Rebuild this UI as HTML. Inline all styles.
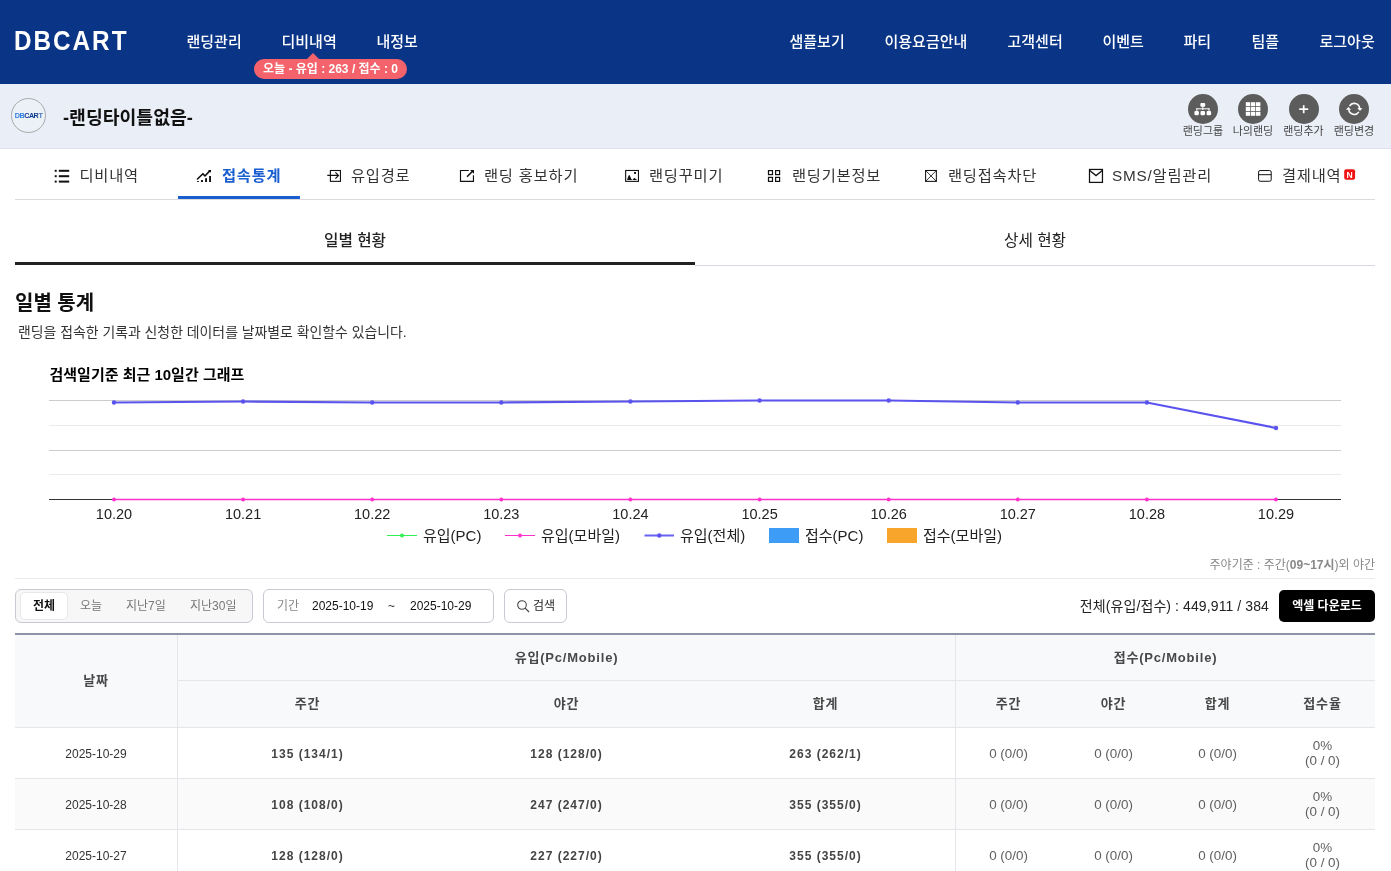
<!DOCTYPE html>
<html lang="ko">
<head>
<meta charset="utf-8">
<title>DBCART</title>
<style>
*{box-sizing:border-box;margin:0;padding:0}
html,body{width:1391px;height:871px;overflow:hidden;background:#fff}
body{will-change:transform;font-family:"Liberation Sans","Noto Sans CJK KR",sans-serif;color:#222;position:relative}
.abs{position:absolute}
/* header */
#hd{position:absolute;left:0;top:0;width:1391px;height:84px;background:#0a3586}
#logo{position:absolute;left:14px;top:22.5px;font-size:27px;line-height:36px;font-weight:700;color:#fff;letter-spacing:2.2px;transform:scaleX(.9);transform-origin:0 0;font-family:"Liberation Sans","Noto Sans CJK KR",sans-serif}
.nav{position:absolute;top:31px;margin-left:-.5px;font-size:15px;line-height:22px;color:#fff;white-space:nowrap;font-weight:500}
#badge{position:absolute;left:254px;top:59px;width:153px;height:20px;border-radius:10px;background:#f4636c;color:#fff;font-size:12px;line-height:21px;font-weight:700;text-align:center;white-space:nowrap}
#badge:before{content:"";position:absolute;left:53px;top:-6px;border-left:6.5px solid transparent;border-right:6.5px solid transparent;border-bottom:6px solid #f4636c}
/* sub header */
#sh{position:absolute;left:0;top:84px;width:1391px;height:65px;background:#eaeef6;border-bottom:1px solid #dde2ec}
#clogo{position:absolute;left:11px;top:14px;width:35px;height:35px;border-radius:50%;background:#ecf0f7;border:1px solid #a9a9a9;text-align:center;font-size:7.2px;line-height:34px;font-weight:700;color:#0c3a8c;letter-spacing:-.45px;white-space:nowrap}
#ttl{position:absolute;left:63px;top:19.5px;font-size:18.3px;line-height:28px;font-weight:700;color:#111;white-space:nowrap}
.ic{position:absolute;top:10px;width:30px;height:30px;border-radius:50%;background:#5c5c5c}
.ic svg{position:absolute;left:0;top:0}
.il{position:absolute;top:40px;width:60px;text-align:center;font-size:11px;line-height:14px;color:#444;white-space:nowrap}
/* tabs */
#tabs{position:absolute;left:15px;top:149px;width:1360px;height:51px;border-bottom:1px solid #dcdcdc}
.tab{position:absolute;top:14.5px;font-size:15.3px;letter-spacing:.8px;line-height:24px;color:#333;white-space:nowrap}
.tab.on{color:#1a5fd0;font-weight:700}
.ti{position:absolute;top:19px}
#tabul{position:absolute;left:163px;top:47px;width:122px;height:3px;background:#1a5fd0}
/* subtabs */
.st{position:absolute;top:229px;width:680px;text-align:center;font-size:15.7px;line-height:24px;color:#222;font-weight:500}

.ft{position:absolute;top:597px;font-size:12px;line-height:18px;color:#777;white-space:nowrap}
#tb{position:absolute;left:15px;top:633px;width:1360px;height:238px}
.th{position:absolute;text-align:center;font-size:13px;line-height:18px;font-weight:700;color:#484848;letter-spacing:.8px;white-space:nowrap;margin-top:2px}
.td{position:absolute;text-align:center;font-size:12px;line-height:18px;color:#333;white-space:nowrap}
.td.b{font-weight:700;letter-spacing:1px;color:#444;margin-top:.5px}
.td.dt{margin-top:.8px}
.td.g{font-size:13.4px;color:#606060;margin-top:.7px}
</style>
</head>
<body>
<div id="hd">
  <div id="logo">DBCART</div>
  <div class="nav" style="left:187px">랜딩관리</div>
  <div class="nav" style="left:282px">디비내역</div>
  <div class="nav" style="left:377px">내정보</div>
  <div class="nav" style="left:790px">샘플보기</div>
  <div class="nav" style="left:885px">이용요금안내</div>
  <div class="nav" style="left:1008px">고객센터</div>
  <div class="nav" style="left:1103px">이벤트</div>
  <div class="nav" style="left:1184px">파티</div>
  <div class="nav" style="left:1252px">팀플</div>
  <div class="nav" style="left:1320px">로그아웃</div>
  <div id="badge">오늘 - 유입 : 263 / 접수 : 0</div>
</div>
<div id="sh">
  <div id="clogo"><span style="color:#2f7de0">DB</span>CAR<span style="color:#4a78c0">T</span></div>
  <div id="ttl">-랜딩타이틀없음-</div>
  <div class="ic" style="left:1188px"><svg width="30" height="30" viewBox="0 0 30 30"><g fill="#fff"><rect x="12.4" y="8.9" width="4.8" height="3.8" rx="1"/><rect x="14.3" y="12" width="1" height="4"/><rect x="8.3" y="14.3" width="13.2" height="1"/><rect x="8.3" y="14.3" width="1" height="3"/><rect x="20.5" y="14.3" width="1" height="3"/><rect x="6.4" y="16.9" width="4.5" height="4.4" rx="1.2"/><rect x="12.5" y="16.9" width="4.5" height="4.4" rx="1.2"/><rect x="18.6" y="16.9" width="4.5" height="4.4" rx="1.2"/></g></svg></div><div class="il" style="left:1173px">랜딩그룹</div>
  <div class="ic" style="left:1238px"><svg width="30" height="30" viewBox="0 0 30 30"><g fill="#fff"><rect x="7.8" y="8.2" width="4.4" height="4"/><rect x="12.9" y="8.2" width="4.4" height="4"/><rect x="18" y="8.2" width="4.4" height="4"/><rect x="7.8" y="13" width="4.4" height="4"/><rect x="12.9" y="13" width="4.4" height="4"/><rect x="18" y="13" width="4.4" height="4"/><rect x="7.8" y="17.8" width="4.4" height="4"/><rect x="12.9" y="17.8" width="4.4" height="4"/><rect x="18" y="17.8" width="4.4" height="4"/></g></svg></div><div class="il" style="left:1223px">나의랜딩</div>
  <div class="ic" style="left:1289px"><svg width="30" height="30" viewBox="0 0 30 30"><g fill="#fff"><rect x="10.2" y="14.3" width="9" height="1.7"/><rect x="13.85" y="11.2" width="1.7" height="8"/></g></svg></div><div class="il" style="left:1273.5px">랜딩추가</div>
  <div class="ic" style="left:1339px"><svg width="30" height="30" viewBox="0 0 30 30"><g fill="none" stroke="#fff" stroke-width="1.5"><path d="M10.58 12.01 A5.45 5.45 0 0 1 20.65 14.4"/><path d="M19.82 17.79 A5.45 5.45 0 0 1 9.75 15.4"/></g><g fill="#fff"><path d="M6.9 15.85 L12.05 15.85 L9.4 13 Z"/><path d="M18.3 14.1 L23.4 14.1 L21 17.05 Z"/></g></svg></div><div class="il" style="left:1324px">랜딩변경</div>
</div>
<div id="tabs">
  <div class="tab" style="left:64.5px">디비내역</div>
  <div class="tab on" style="left:207px">접속통계</div>
  <div class="tab" style="left:336px">유입경로</div>
  <div class="tab" style="left:469px">랜딩 홍보하기</div>
  <div class="tab" style="left:634px">랜딩꾸미기</div>
  <div class="tab" style="left:777px">랜딩기본정보</div>
  <div class="tab" style="left:933px">랜딩접속차단</div>
  <div class="tab" style="left:1097px">SMS/알림관리</div>
  <div class="tab" style="left:1267px">결제내역</div>
  <svg class="abs" style="left:39px;top:20px" width="16" height="14" viewBox="0 0 16 14"><g fill="#111"><rect x=".7" y=".8" width="2" height="2"/><rect x="4.8" y=".8" width="10.4" height="2"/><rect x=".7" y="6.2" width="2" height="2"/><rect x="4.8" y="6.2" width="10.4" height="2"/><rect x=".7" y="11.6" width="2" height="2"/><rect x="4.8" y="11.6" width="10.4" height="2"/></g></svg>
  <svg class="abs" style="left:181px;top:20px" width="16" height="14" viewBox="0 0 16 14"><g fill="#111"><rect x=".96" y="12.1" width="1.95" height=".9"/><rect x="4.95" y="11.1" width="2.05" height="1.9"/><rect x="9.1" y="9.2" width="1.9" height="3.8"/><rect x="13.1" y="7" width="1.9" height="6"/><path d="M12 1 H15 V3.8 Z"/></g><path d="M1.5 10 L6.9 4.7 L8.95 7 L13.8 1.9" fill="none" stroke="#111" stroke-width="1.6" stroke-linejoin="round" stroke-linecap="round"/></svg>
  <svg class="abs" style="left:312px;top:20px" width="15" height="14" viewBox="0 0 15 14"><g fill="none" stroke="#111" stroke-width="1.1"><rect x="3.4" y="1.5" width="10.06" height="10.86"/><path d="M.3 6.44 H11.2 M8.4 3.3 L11.5 6.44 L8.4 9.6" stroke-width="1.2"/></g></svg>
  <svg class="abs" style="left:444px;top:20px" width="17" height="14" viewBox="0 0 17 14"><g fill="none" stroke="#111" stroke-width="1.15"><path d="M9.8 1.45 H1.5 V12.35 H14.45 V6.2"/><path d="M8.5 7.3 L13.6 2.2" stroke-width="1.6" stroke-linecap="round"/></g><path d="M11 1 H15 V4.8 Z" fill="#111"/></svg>
  <svg class="abs" style="left:609px;top:20px" width="16" height="14" viewBox="0 0 16 14"><rect x="1.65" y="1.48" width="12.81" height="10.88" fill="none" stroke="#111" stroke-width="1.1"/><path d="M3 10.9 L4.4 7 Q5.2 5 6 7 L7.3 10 L8.6 10.9 Z M8.6 10.9 L10.2 8.8 L13.2 10.9 Z" fill="#111"/><rect x="10.05" y="3" width="1.95" height="1.9" fill="#111"/></svg>
  <svg class="abs" style="left:752px;top:20px" width="15" height="14" viewBox="0 0 15 14"><g fill="none" stroke="#111" stroke-width="1.2"><rect x="1.5" y="1.6" width="4" height="4"/><rect x="8.6" y="1.6" width="4" height="4"/><rect x="1.5" y="8.4" width="4" height="4"/><rect x="8.6" y="8.4" width="4" height="4"/></g></svg>
  <svg class="abs" style="left:909px;top:20px" width="14" height="14" viewBox="0 0 14 14"><g fill="none" stroke="#111" stroke-width="1.05"><rect x="1.6" y="1.48" width="10.76" height="10.88"/><path d="M1.6 1.48 L12.36 12.36 M12.36 1.48 L1.6 12.36" stroke-width=".85"/></g></svg>
  <svg class="abs" style="left:1073px;top:19px" width="16" height="16" viewBox="0 0 16 16"><g fill="none" stroke="#111" stroke-width="1.25"><rect x="1.5" y="1.45" width="12.96" height="12.95"/><path d="M1.7 2.4 L8 7.6 L14.3 2.4"/></g></svg>
  <svg class="abs" style="left:1242px;top:20px" width="16" height="14" viewBox="0 0 16 14"><g fill="none" stroke="#111" stroke-width="1"><rect x="1.6" y="1.55" width="12.6" height="10.7" rx="1.5"/><path d="M1.6 5.7 H14.2"/></g></svg>
  <svg class="abs" style="left:1329px;top:20px" width="12" height="12" viewBox="0 0 12 12"><rect x=".2" y=".2" width="10.9" height="10.6" rx="2" fill="#f01414"/><text x="5.65" y="8.6" font-size="8.6" font-weight="700" fill="#fff" text-anchor="middle" font-family="'Liberation Sans',sans-serif">N</text></svg>
  <div id="tabul"></div>
</div>
<div class="st" style="left:15px">일별 현황</div>
<div class="st" style="left:695px;font-weight:400">상세 현황</div>
<div class="abs" style="left:15px;top:262px;width:680px;height:3px;background:#222"></div>
<div class="abs" style="left:695px;top:265px;width:680px;height:1px;background:#d8d8e0"></div>

<div class="abs" style="left:15px;top:288.5px;font-size:20px;line-height:28px;font-weight:700;color:#111;white-space:nowrap">일별 통계</div>
<div class="abs" style="left:18px;top:322px;font-size:13.9px;line-height:20px;color:#333;white-space:nowrap">랜딩을 접속한 기록과 신청한 데이터를 날짜별로 확인할수 있습니다.</div>
<div class="abs" style="left:49.5px;top:364px;font-size:15px;line-height:22px;font-weight:700;color:#000;white-space:nowrap">검색일기준 최근 10일간 그래프</div>
<svg class="abs" style="left:0;top:385px" width="1391" height="170" viewBox="0 385 1391 170" font-family="'Liberation Sans','Noto Sans CJK KR',sans-serif">
  <rect x="49" y="400" width="1292" height="1" fill="#ccc"/>
  <rect x="49" y="425" width="1292" height="1" fill="#ebebeb"/>
  <rect x="49" y="450" width="1292" height="1" fill="#ccc"/>
  <rect x="49" y="474" width="1292" height="1" fill="#ebebeb"/>
  <rect x="49" y="499" width="1292" height="1" fill="#333"/>
  <g id="pts"></g>
  <polyline fill="none" stroke="#5b53ee" stroke-width="2.2" points="114,402.5 243.1,401.5 372.2,402.5 501.3,402.5 630.4,401.5 759.6,400.5 888.7,400.5 1017.8,402.5 1146.9,402.5 1276,428"/>
  <polyline fill="none" stroke="#ff33cc" stroke-width="1.3" points="114,499.5 1276,499.5"/>
  <g fill="#5b53ee">
    <circle cx="114" cy="402.5" r="2.2"/><circle cx="243.1" cy="401.5" r="2.2"/><circle cx="372.2" cy="402.5" r="2.2"/><circle cx="501.3" cy="402.5" r="2.2"/><circle cx="630.4" cy="401.5" r="2.2"/><circle cx="759.6" cy="400.5" r="2.2"/><circle cx="888.7" cy="400.5" r="2.2"/><circle cx="1017.8" cy="402.5" r="2.2"/><circle cx="1146.9" cy="402.5" r="2.2"/><circle cx="1276" cy="428" r="2.2"/>
  </g>
  <g fill="#ff33cc">
    <circle cx="114" cy="499.5" r="2"/><circle cx="243.1" cy="499.5" r="2"/><circle cx="372.2" cy="499.5" r="2"/><circle cx="501.3" cy="499.5" r="2"/><circle cx="630.4" cy="499.5" r="2"/><circle cx="759.6" cy="499.5" r="2"/><circle cx="888.7" cy="499.5" r="2"/><circle cx="1017.8" cy="499.5" r="2"/><circle cx="1146.9" cy="499.5" r="2"/><circle cx="1276" cy="499.5" r="2"/>
  </g>
  <g font-size="14.5" fill="#222" text-anchor="middle">
    <text x="114" y="519">10.20</text><text x="243.1" y="519">10.21</text><text x="372.2" y="519">10.22</text><text x="501.3" y="519">10.23</text><text x="630.4" y="519">10.24</text><text x="759.6" y="519">10.25</text><text x="888.7" y="519">10.26</text><text x="1017.8" y="519">10.27</text><text x="1146.9" y="519">10.28</text><text x="1276" y="519">10.29</text>
  </g>
  <g font-size="15" fill="#222">
    <rect x="387" y="535" width="30" height="1" fill="#33ee55"/><circle cx="402" cy="535.5" r="2" fill="#33ee55"/><text x="423" y="540.5">유입(PC)</text>
    <rect x="505" y="535" width="30" height="1" fill="#ff33cc"/><circle cx="520" cy="535.5" r="2" fill="#ff33cc"/><text x="541" y="540.5">유입(모바일)</text>
    <rect x="644.5" y="534.5" width="29.5" height="2" fill="#6a62f2"/><circle cx="659.3" cy="535.5" r="2.2" fill="#5b53ee"/><text x="680" y="540.5">유입(전체)</text>
    <rect x="769" y="528" width="30" height="15" fill="#3d9cf5"/><text x="805" y="540.5">접수(PC)</text>
    <rect x="887" y="528" width="30" height="15" fill="#f7a62b"/><text x="923" y="540.5">접수(모바일)</text>
  </g>
</svg>
<div class="abs" style="right:16px;top:556px;font-size:12px;line-height:18px;color:#888;white-space:nowrap">주야기준 : 주간(<b>09~17시</b>)외 야간</div>
<div class="abs" style="left:15px;top:578px;width:1360px;height:1px;background:#e9e9e9"></div>
<!-- filter -->
<div class="abs" style="left:15px;top:589px;width:238px;height:34px;border:1px solid #c9c9d1;border-radius:6px;background:#f7f7f7"></div>
<div class="abs" style="left:20px;top:592px;width:48px;height:28px;border:1px solid #e8e8e8;border-radius:5px;background:#fff;font-size:12px;line-height:26px;text-align:center;font-weight:700;color:#111">전체</div>
<div class="ft" style="left:80px">오늘</div>
<div class="ft" style="left:126px">지난7일</div>
<div class="ft" style="left:190px">지난30일</div>
<div class="abs" style="left:263px;top:589px;width:231px;height:34px;border:1px solid #c9c9d1;border-radius:6px;background:#fff"></div>
<div class="ft" style="left:277px;color:#888">기간</div>
<div class="ft" style="left:312px;color:#111">2025-10-19</div>
<div class="ft" style="left:388px;color:#333">~</div>
<div class="ft" style="left:410px;color:#111">2025-10-29</div>
<div class="abs" style="left:504px;top:589px;width:63px;height:34px;border:1px solid #c9c9d1;border-radius:6px;background:#fff"></div>
<svg class="abs" style="left:516px;top:599px" width="14" height="14" viewBox="0 0 14 14"><circle cx="6" cy="6" r="4.3" fill="none" stroke="#444" stroke-width="1.1"/><path d="M9.2 9.2L13 13" stroke="#444" stroke-width="1.2"/></svg>
<div class="ft" style="left:533px;color:#222">검색</div>
<div class="abs" style="right:122px;top:596px;font-size:14px;line-height:20px;color:#222;letter-spacing:.1px;white-space:nowrap">전체(유입/접수) : 449,911 / 384</div>
<div class="abs" style="left:1279px;top:590px;width:96px;height:32px;border-radius:5px;background:#000;color:#fff;font-size:12px;line-height:32px;font-weight:700;text-align:center">엑셀 다운로드</div>
<!-- table -->
<div id="tb">
  <div class="abs" style="left:0;top:0;width:1360px;height:2px;background:#8d92a6"></div>
  <div class="abs" style="left:0;top:2px;width:1360px;height:93px;background:#f8f9fb"></div>
  <div class="abs" style="left:0;top:146px;width:1360px;height:50px;background:#fafafa"></div>
  <div class="abs" style="left:162px;top:2px;width:1px;height:240px;background:#e5e5ea"></div>
  <div class="abs" style="left:940px;top:2px;width:1px;height:240px;background:#e5e5ea"></div>
  <div class="abs" style="left:163px;top:47px;width:1197px;height:1px;background:#e5e5ea"></div>
  <div class="abs" style="left:0;top:94px;width:1360px;height:1px;background:#e5e5ea"></div>
  <div class="abs" style="left:0;top:145px;width:1360px;height:1px;background:#e5e5ea"></div>
  <div class="abs" style="left:0;top:196px;width:1360px;height:1px;background:#e5e5ea"></div>
  <div class="th" style="left:0;width:162px;top:37px">날짜</div>
  <div class="th" style="left:163px;width:777px;top:14px">유입(Pc/Mobile)</div>
  <div class="th" style="left:941px;width:419px;top:14px">접수(Pc/Mobile)</div>
  <div class="th" style="left:163px;width:259px;top:60px">주간</div>
  <div class="th" style="left:422px;width:259px;top:60px">야간</div>
  <div class="th" style="left:681px;width:259px;top:60px">합계</div>
  <div class="th" style="left:941px;width:105px;top:60px">주간</div>
  <div class="th" style="left:1046px;width:105px;top:60px">야간</div>
  <div class="th" style="left:1150px;width:105px;top:60px">합계</div>
  <div class="th" style="left:1255px;width:105px;top:60px">접수율</div>
  <div class="td dt" style="left:0;width:162px;top:111px">2025-10-29</div>
  <div class="td b" style="left:163px;width:259px;top:111px">135 (134/1)</div>
  <div class="td b" style="left:422px;width:259px;top:111px">128 (128/0)</div>
  <div class="td b" style="left:681px;width:259px;top:111px">263 (262/1)</div>
  <div class="td g" style="left:941px;width:105px;top:111px">0 (0/0)</div>
  <div class="td g" style="left:1046px;width:105px;top:111px">0 (0/0)</div>
  <div class="td g" style="left:1150px;width:105px;top:111px">0 (0/0)</div>
  <div class="td g" style="left:1255px;width:105px;top:104px;line-height:15px">0%<br>(0 / 0)</div>
  <div class="td dt" style="left:0;width:162px;top:162px">2025-10-28</div>
  <div class="td b" style="left:163px;width:259px;top:162px">108 (108/0)</div>
  <div class="td b" style="left:422px;width:259px;top:162px">247 (247/0)</div>
  <div class="td b" style="left:681px;width:259px;top:162px">355 (355/0)</div>
  <div class="td g" style="left:941px;width:105px;top:162px">0 (0/0)</div>
  <div class="td g" style="left:1046px;width:105px;top:162px">0 (0/0)</div>
  <div class="td g" style="left:1150px;width:105px;top:162px">0 (0/0)</div>
  <div class="td g" style="left:1255px;width:105px;top:155px;line-height:15px">0%<br>(0 / 0)</div>
  <div class="td dt" style="left:0;width:162px;top:213px">2025-10-27</div>
  <div class="td b" style="left:163px;width:259px;top:213px">128 (128/0)</div>
  <div class="td b" style="left:422px;width:259px;top:213px">227 (227/0)</div>
  <div class="td b" style="left:681px;width:259px;top:213px">355 (355/0)</div>
  <div class="td g" style="left:941px;width:105px;top:213px">0 (0/0)</div>
  <div class="td g" style="left:1046px;width:105px;top:213px">0 (0/0)</div>
  <div class="td g" style="left:1150px;width:105px;top:213px">0 (0/0)</div>
  <div class="td g" style="left:1255px;width:105px;top:206px;line-height:15px">0%<br>(0 / 0)</div>

</div>

</body>
</html>
